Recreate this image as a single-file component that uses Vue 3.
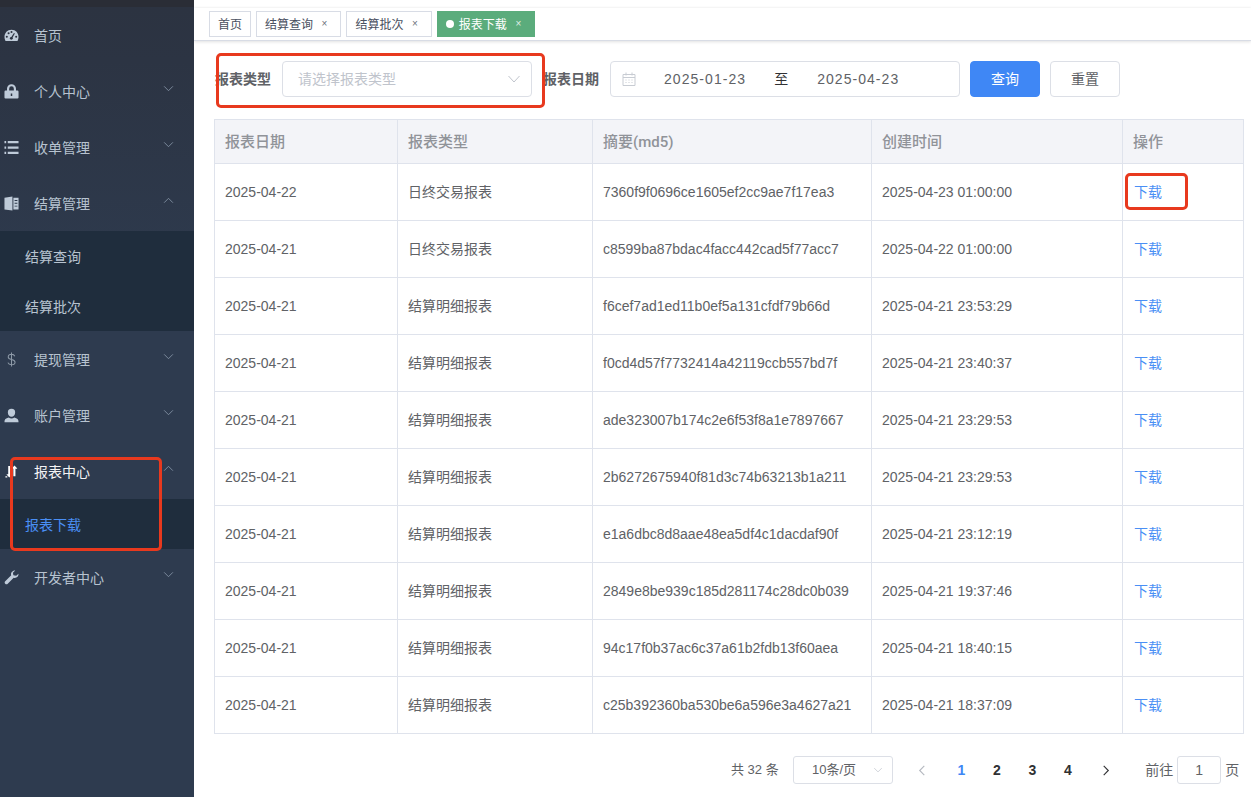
<script setup>
const menus = [
  { name: '首页', icon: 'dashboard' },
  { name: '个人中心', icon: 'lock', arrow: 'down' },
  { name: '收单管理', icon: 'list', arrow: 'down' },
  { name: '结算管理', icon: 'book', arrow: 'up', children: ['结算查询', '结算批次'] },
  { name: '提现管理', icon: 'dollar', arrow: 'down' },
  { name: '账户管理', icon: 'user', arrow: 'down' },
  { name: '报表中心', icon: 'sort', arrow: 'up', active: true, children: ['报表下载'], current: '报表下载' },
  { name: '开发者中心', icon: 'wrench', arrow: 'down' }
]

const tags = [
  { name: '首页' },
  { name: '结算查询', close: true },
  { name: '结算批次', close: true },
  { name: '报表下载', close: true, active: true }
]

const columns = ['报表日期', '报表类型', '摘要(md5)', '创建时间', '操作']

const rows = [
  ['2025-04-22', '日终交易报表', '7360f9f0696ce1605ef2cc9ae7f17ea3', '2025-04-23 01:00:00'],
  ['2025-04-21', '日终交易报表', 'c8599ba87bdac4facc442cad5f77acc7', '2025-04-22 01:00:00'],
  ['2025-04-21', '结算明细报表', 'f6cef7ad1ed11b0ef5a131cfdf79b66d', '2025-04-21 23:53:29'],
  ['2025-04-21', '结算明细报表', 'f0cd4d57f7732414a42119ccb557bd7f', '2025-04-21 23:40:37'],
  ['2025-04-21', '结算明细报表', 'ade323007b174c2e6f53f8a1e7897667', '2025-04-21 23:29:53'],
  ['2025-04-21', '结算明细报表', '2b6272675940f81d3c74b63213b1a211', '2025-04-21 23:29:53'],
  ['2025-04-21', '结算明细报表', 'e1a6dbc8d8aae48ea5df4c1dacdaf90f', '2025-04-21 23:12:19'],
  ['2025-04-21', '结算明细报表', '2849e8be939c185d281174c28dc0b039', '2025-04-21 19:37:46'],
  ['2025-04-21', '结算明细报表', '94c17f0b37ac6c37a61b2fdb13f60aea', '2025-04-21 18:40:15'],
  ['2025-04-21', '结算明细报表', 'c25b392360ba530be6a596e3a4627a21', '2025-04-21 18:37:09']
]

const pages = [1, 2, 3, 4]
</script>

<template>
  <div class="layout">
    <aside class="sidebar">
      <template v-for="m in menus" :key="m.name">
        <div class="menu-item" :class="{ 'menu-active': m.active }">
          <svg class="menu-icon" viewBox="0 0 16 16">
            <g v-if="m.icon === 'dashboard'">
              <path d="M8 1.800C3.600 1.800.5 5.200.5 9.500c0 1.600.4 3 1.100 4.300h12.800c.7-1.300 1.100-2.700 1.100-4.300 0-4.300-3.100-7.700-7.500-7.700z" />
              <circle cx="3" cy="9.300" r="1.100" class="hole" />
              <circle cx="4.900" cy="5.500" r="1.100" class="hole" />
              <circle cx="8" cy="4.200" r="1.100" class="hole" />
              <circle cx="13" cy="9.300" r="1.100" class="hole" />
              <circle cx="7.800" cy="11" r="1.500" class="hole" />
              <path d="M7 10.800l3.600-5.600 1 .6-3.400 5.800z" class="hole" />
            </g>
            <path v-else-if="m.icon === 'lock'" fill-rule="evenodd" d="M3.200 7V5a4.800 4.800 0 0 1 9.600 0v2h1.500a1.200 1.200 0 0 1 1.200 1.200v6.100a1.200 1.200 0 0 1-1.200 1.200H1.700a1.200 1.200 0 0 1-1.200-1.200V8.200A1.200 1.200 0 0 1 1.700 7zm2.300 0h5V5a2.500 2.500 0 0 0-5 0zM7.200 10v2.800h1.600V10z" />
            <path v-else-if="m.icon === 'list'" d="M.5 1h1.800v2.400H.5zm0 5.800h1.800v2.400H.5zm0 5.800h1.800V15H.5zM4 1h11.500v2.400H4zm0 5.800h11.500v2.400H4zm0 5.800h11.500V15H4z" />
            <path v-else-if="m.icon === 'book'" fill-rule="evenodd" d="M.5 1.800 9 .5v15L.5 14.500zM10 1.800h5.500v12.700H10zm1.300 2.500v1h3v-1zm0 3v1h3v-1zm0 3v1h3v-1z" />
            <g v-else-if="m.icon === 'dollar'" class="stroke-icon">
              <path d="M11.500 4.500C11 3.200 9.700 2.500 8 2.500c-2 0-3.500 1-3.500 2.700 0 3.800 7.300 1.900 7.300 5.700 0 1.700-1.700 2.700-3.800 2.700-1.900 0-3.300-.8-3.800-2.200M8 .5v15" />
            </g>
            <path v-else-if="m.icon === 'user'" d="M8 .8a3.900 3.900 0 0 1 3.900 4c0 2.500-1.700 4.500-3.900 4.500S4.100 7.300 4.100 4.800A3.900 3.900 0 0 1 8 .8zM.5 15.200c-.3-2.900 1.500-4.300 4.500-5 .9.700 1.900 1 3 1s2.100-.3 3-1c3 .7 4.800 2.100 4.500 5z" />
            <path v-else-if="m.icon === 'sort'" d="M4.500 2h2.200v9h2l-3.100 3.500L2.500 11h2zM10 13V5H8l3.200-3.500L14 4.500V5h-1.800v8zM1.500 13h2v1.500h-2z" />
            <path v-else-if="m.icon === 'wrench'" d="M15.500 4c.3 2.700-2.400 5.300-5.200 4.300L4 14.700c-.8.800-2 .8-2.700 0-.8-.7-.8-1.900 0-2.700L7.700 5.700C6.700 2.900 9.300.2 12 .5L9.500 3l.5 2.500 3 .5z" />
          </svg>
          <span class="menu-name">{{ m.name }}</span>
          <svg v-if="m.arrow" class="menu-arrow" viewBox="0 0 12 8">
            <path :d="m.arrow === 'up' ? 'M1 6.500 6 1.500l5 5' : 'M1 1.500l5 5 5-5'" />
          </svg>
        </div>
        <div v-if="m.children" class="submenu">
          <div v-for="c in m.children" :key="c" class="submenu-item" :class="{ 'submenu-current': c === m.current }">{{ c }}</div>
        </div>
      </template>
    </aside>

    <main class="main">
      <div class="tags-bar">
        <div v-for="t in tags" :key="t.name" class="tag" :class="{ 'tag-active': t.active, 'tag-plain': !t.close }">
          <i v-if="t.active" class="tag-dot"></i>
          <span>{{ t.name }}</span>
          <span v-if="t.close" class="tag-close">×</span>
        </div>
      </div>

      <div class="content">
        <form class="filters" @submit.prevent>
          <label class="filter-label">报表类型</label>
          <div class="select">
            <span>请选择报表类型</span>
            <svg class="select-arrow" viewBox="0 0 12 8"><path d="M.5 1l5.500 6 5.500-6" /></svg>
          </div>
          <label class="filter-label date-label">报表日期</label>
          <div class="date-range">
            <svg class="calendar" viewBox="0 0 14 14">
              <path d="M1 2.500h12v11H1zM1 5.500h12M4 .5v3M10 .5v3M3.500 8h1M6.500 8h1M9.500 8h1M3.500 10.500h1M6.500 10.500h1M9.500 10.500h1" />
            </svg>
            <span class="date-value">2025-01-23</span>
            <span class="date-sep">至</span>
            <span class="date-value">2025-04-23</span>
          </div>
          <button class="btn btn-primary" type="button">查询</button>
          <button class="btn" type="button">重置</button>
        </form>

        <table class="report-table">
          <colgroup>
            <col class="col-date" />
            <col class="col-type" />
            <col class="col-md5" />
            <col class="col-time" />
            <col class="col-op" />
          </colgroup>
          <thead>
            <tr>
              <th v-for="c in columns" :key="c">{{ c }}</th>
            </tr>
          </thead>
          <tbody>
            <tr v-for="r in rows" :key="r[2]">
              <td v-for="(v, i) in r" :key="i">{{ v }}</td>
              <td><a class="download">下载</a></td>
            </tr>
          </tbody>
        </table>

        <div class="pagination">
          <span class="total">共 32 条</span>
          <div class="page-size">
            <span>10条/页</span>
            <svg class="size-arrow" viewBox="0 0 12 8"><path d="M1 1.500l5 5 5-5" /></svg>
          </div>
          <svg class="page-nav nav-prev" viewBox="0 0 8 12"><path d="M6.500 1l-5 5 5 5" /></svg>
          <span v-for="p in pages" :key="p" class="page-num" :class="{ 'page-current': p === 1 }">{{ p }}</span>
          <svg class="page-nav nav-next" viewBox="0 0 8 12"><path d="M1.500 1l5 5-5 5" /></svg>
          <span class="jump">前往</span>
          <div class="jump-input">1</div>
          <span class="jump">页</span>
        </div>
      </div>
    </main>

    <!-- 截图上的红色标注框 -->
    <div class="mark mark-filter"></div>
    <div class="mark mark-menu"></div>
    <div class="mark mark-download"></div>
  </div>
</template>

<style>
html,
body {
  margin: 0;
  background: #fff;
}
</style>

<style scoped>
.layout {
  position: relative;
  display: flex;
  width: 1251px;
  height: 797px;
  overflow: hidden;
  font-family: "Liberation Sans", "Noto Sans CJK SC", sans-serif;
  font-size: 14px;
  color: #606266;
}

.sidebar {
  width: 194px;
  flex-shrink: 0;
  padding-top: 7px;
  box-sizing: border-box;
  background: linear-gradient(#2c3341 7px, #2c3443 60px, #2e3b4f 300px);
  position: relative;
}

.sidebar::before {
  content: '';
  position: absolute;
  left: 0;
  top: 0;
  right: 0;
  height: 7px;
  background: #2a2d36;
}

.menu-item {
  display: flex;
  align-items: center;
  height: 56px;
  color: #b7c3d0;
}

.menu-active {
  color: #f4f4f5;
}

.menu-icon {
  width: 15px;
  height: 15px;
  margin: 0 15.500px 0 3.500px;
  fill: #bfcbd9;
  flex-shrink: 0;
}

.menu-active .menu-icon {
  fill: #fff;
}

.stroke-icon {
  fill: none;
  stroke: #8e9aa8;
  stroke-width: 1.100;
}

.hole {
  fill: #2c3341;
}

.menu-name {
  flex: 1;
}

.menu-arrow {
  width: 11px;
  height: 7px;
  margin: -6px 20px 0 0;
  fill: none;
  stroke: #8392a5;
  stroke-width: 1;
}

.submenu {
  background: #1f2d3d;
}

.submenu-item {
  height: 50px;
  padding: 2px 0 0 25px;
  box-sizing: border-box;
  line-height: 48px;
  color: #b7c3d0;
}

.submenu-current {
  color: #4a8ff5;
}

.main {
  flex: 1;
  min-width: 0;
}

.tags-bar {
  display: flex;
  align-items: center;
  gap: 5px;
  height: 33px;
  margin-top: 8px;
  padding: 0 0 1px 15px;
  box-sizing: border-box;
  background: #fff;
  border-bottom: 1px solid #d8dce5;
  box-shadow: 0 1px 3px rgba(0, 0, 0, 0.12), 0 -1px 2px rgba(0, 0, 0, 0.03);
}

.tag {
  display: flex;
  align-items: center;
  height: 26px;
  padding: 0 10.400px 0 8px;
  box-sizing: border-box;
  border: 1px solid #d8dce5;
  font-size: 12px;
  color: #495060;
}

.tag-plain {
  padding-right: 8px;
}

.tag-active {
  background: #5bac7c;
  border-color: #5bac7c;
  color: #fff;
}

.tag-dot {
  width: 8px;
  height: 8px;
  margin-right: 5px;
  border-radius: 50%;
  background: #fff;
}

.tag-close {
  margin-left: 6px;
  width: 11px;
  font-size: 10px;
  text-align: center;
  opacity: 0.8;
}

.content {
  padding: 20px 8px 0 20px;
}

.filters {
  display: flex;
  align-items: center;
  height: 36px;
  margin-bottom: 22px;
  line-height: 20px;
}

.filter-label {
  width: 67px;
  font-weight: 700;
  color: #606266;
  white-space: nowrap;
  margin-left: 1px;
}

.date-label {
  margin-left: 11px;
  margin-right: 0;
}

.select {
  display: flex;
  align-items: center;
  justify-content: space-between;
  width: 250px;
  height: 36px;
  padding: 0 11px 0 15px;
  box-sizing: border-box;
  border: 1px solid #dcdfe6;
  border-radius: 4px;
  color: #c0c4cc;
}

.select-arrow {
  width: 12px;
  height: 8px;
  fill: none;
  stroke: #c0c4cc;
  stroke-width: 1;
}

.date-range {
  display: flex;
  align-items: center;
  width: 350px;
  height: 36px;
  margin-right: 10px;
  padding-left: 11px;
  box-sizing: border-box;
  border: 1px solid #dcdfe6;
  border-radius: 4px;
}

.calendar {
  width: 14px;
  height: 14px;
  margin-right: 28px;
  fill: none;
  stroke: #c8ccd3;
  stroke-width: 1;
}

.date-value {
  letter-spacing: 1.050px;
  white-space: nowrap;
}

.date-sep {
  margin: 0 29px 0 28px;
  color: #303133;
}

.btn {
  width: 70px;
  height: 36px;
  margin-right: 10px;
  padding: 0;
  background: #fff;
  border: 1px solid #dcdfe6;
  border-radius: 4px;
  font: inherit;
  line-height: 20px;
  color: #606266;
}

.btn-primary {
  background: #3f87f5;
  border-color: #3f87f5;
  color: #fff;
}

.report-table {
  width: 1029px;
  table-layout: fixed;
  border-collapse: collapse;
}

.col-date {
  width: 183px;
}

.col-type {
  width: 195px;
}

.col-md5 {
  width: 279px;
}

.col-time {
  width: 251px;
}

.col-op {
  width: 121px;
}

.report-table th,
.report-table td {
  padding: 0 10px;
  border: 1px solid #dfe3ec;
  text-align: left;
  line-height: 20px;
  white-space: nowrap;
  overflow: hidden;
}

.report-table th {
  height: 43px;
  background: #f3f4f8;
  font-family: Roboto, "Noto Sans CJK SC", sans-serif;
  font-size: 15px;
  font-weight: 500;
  color: #909399;
}

.report-table td {
  height: 56px;
}

.download {
  margin-left: 1px;
  color: #4a8ff5;
}

.pagination {
  display: flex;
  align-items: center;
  height: 28px;
  margin-top: 22px;
  padding-left: 517px;
  font-size: 13px;
  line-height: 20px;
}

.total {
  width: 62px;
  white-space: nowrap;
}

.page-size {
  display: flex;
  align-items: center;
  justify-content: space-between;
  width: 100px;
  height: 28px;
  padding: 0 9px 0 18px;
  box-sizing: border-box;
  border: 1px solid #dcdfe6;
  border-radius: 3px;
}

.size-arrow {
  width: 10px;
  height: 6px;
  fill: none;
  stroke: #c0c4cc;
  stroke-width: 1;
}

.page-nav {
  width: 8px;
  height: 11px;
  fill: none;
  stroke-width: 1.200;
}

.nav-prev {
  margin: 0 17.750px 0 25px;
  stroke: #b4b8bf;
}

.nav-next {
  margin: 0 35px 0 16.500px;
  stroke: #303133;
}

.page-num {
  width: 35.500px;
  font-size: 14px;
  text-align: center;
  font-weight: 700;
  color: #303133;
}

.page-current {
  color: #3f87f5;
}

.jump {
  font-size: 14px;
  white-space: nowrap;
}

.jump-input {
  width: 44px;
  height: 28px;
  margin: 0 4px;
  line-height: 26px;
  box-sizing: border-box;
  border: 1px solid #dcdfe6;
  border-radius: 3px;
  font-size: 14px;
  text-align: center;
}

.mark {
  position: absolute;
  box-sizing: border-box;
  border: 3px solid #e8391e;
  border-radius: 5px;
}

.mark-filter {
  left: 216px;
  top: 53px;
  width: 329px;
  height: 55px;
}

.mark-menu {
  left: 10px;
  top: 457px;
  width: 152px;
  height: 94px;
}

.mark-download {
  left: 1125px;
  top: 173px;
  width: 63px;
  height: 37px;
}
</style>
